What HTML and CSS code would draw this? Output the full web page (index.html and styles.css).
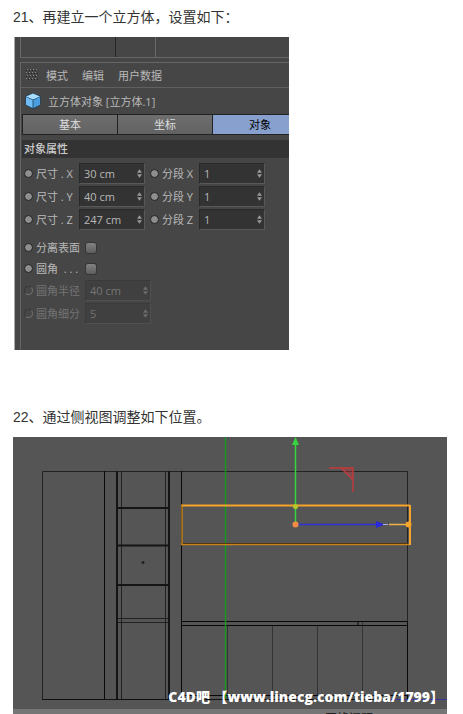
FILE: index.html
```html
<!DOCTYPE html>
<html lang="zh-CN">
<head>
<meta charset="utf-8">
<title>立方体建模步骤</title>
<link rel="stylesheet" href="styles.css">
</head>
<body>
<svg class="defs" width="0" height="0" aria-hidden="true">
  <symbol id="spin" viewBox="0 0 6 10"><path d="M3 0 6 4H0zM3 10 0 6h6z" fill="currentColor"/></symbol>
</svg>
<main class="article">
  <p class="step">21、再建立一个立方体，设置如下：</p>
  <section class="panel" aria-label="立方体对象">
    <div class="strip"><span></span><span></span><span></span></div>
    <div class="inner">
      <nav class="menu">
        <svg class="grip" width="13" height="12" viewBox="0 0 13 12" aria-hidden="true">
          <g stroke="#8a8a8a" stroke-dasharray="1 2"><path d="M1 .5h12M0 3.5h12M1 6.5h12M0 9.5h12"/></g>
          <g stroke="#222" stroke-dasharray="1 2"><path d="M0 1.500h12M2 4.500h11M0 7.500h12M2 10.500h11"/></g>
        </svg>
        <button type="button">模式</button><button type="button">编辑</button><button type="button">用户数据</button>
      </nav>
      <div class="title">
        <svg width="16" height="16" viewBox="0 0 16 16" aria-hidden="true">
          <path d="M8 0 15.500 3v9L8 16 .5 12V3z" fill="#16405f"/>
          <path d="M8 .6 15 3.400 8 6.400 1 3.400z" fill="#a9dcff"/>
          <path d="M1 4l6.600 3v8L1 11.700z" fill="#70bdf5"/>
          <path d="M15 4 8.400 7v8l6.600-3.300z" fill="#4a9ee0"/>
        </svg>
        <span>立方体对象 [立方体.1]</span>
      </div>
      <div class="tabs">
        <button type="button">基本</button><button type="button">坐标</button><button type="button" class="active">对象</button>
      </div>
      <h2 class="group">对象属性</h2>
      <div class="sizes">
        <i class="dot"></i><label for="sx">尺寸 . X</label><span class="field"><input id="sx" value="30 cm"><svg><use href="#spin"/></svg></span>
        <i class="dot"></i><label for="nx">分段 X</label><span class="field"><input id="nx" value="1"><svg><use href="#spin"/></svg></span>
        <i class="dot"></i><label for="sy">尺寸 . Y</label><span class="field"><input id="sy" value="40 cm"><svg><use href="#spin"/></svg></span>
        <i class="dot"></i><label for="ny">分段 Y</label><span class="field"><input id="ny" value="1"><svg><use href="#spin"/></svg></span>
        <i class="dot"></i><label for="sz">尺寸 . Z</label><span class="field"><input id="sz" value="247 cm"><svg><use href="#spin"/></svg></span>
        <i class="dot"></i><label for="nz">分段 Z</label><span class="field"><input id="nz" value="1"><svg><use href="#spin"/></svg></span>
      </div>
      <div class="options">
        <i class="dot"></i><label for="sep">分离表面</label><input type="checkbox" id="sep">
        <i class="dot"></i><label for="fil">圆角 &nbsp;. . .</label><input type="checkbox" id="fil">
        <i class="dot off"></i><label class="dim" for="rad">圆角半径</label><span class="field dim"><input id="rad" value="40 cm" disabled><svg><use href="#spin"/></svg></span>
        <i class="dot off"></i><label class="dim" for="sub">圆角细分</label><span class="field dim"><input id="sub" value="5" disabled><svg><use href="#spin"/></svg></span>
      </div>
    </div>
  </section>
  <p class="step">22、通过侧视图调整如下位置。</p>
  <figure class="view">
    <svg class="wire" viewBox="0 0 434 277" role="img" aria-label="侧视图">
      <rect width="434" height="277" fill="#555"/>
      <rect y="272" width="434" height="5" fill="#757575"/>
      <g fill="none" stroke="#222">
        <path d="M29.500 262V34.500H394.500V262"/>
        <path d="M29 262.500H395" stroke="#111"/>
        <path d="M108.500 35V262M152.500 35V262"/>
        <path d="M104 181.500h52M104 185.500h52"/>
        <path d="M259.500 189v73M304.500 189v73" stroke="#333"/>
        <path d="M214.500 189v73M349.500 185v77" stroke="#333"/>
      </g>
      <g fill="none" stroke="#080808">
        <path d="M91.500 34V262M168.500 34V262"/>
        <path d="M168 184.500H395M168 188.500H395M394.500 184V262M168 258.500H395M345 184v4"/>
      </g>
      <path d="M104 34V262M156 34V262M104 71h52M104 108.500h52M104 148h52" fill="none" stroke="#151515" stroke-width="2"/>
      <circle cx="130" cy="125.500" r="1.500" fill="#222"/>
      <path d="M212.500 0V262" stroke="#149a22" stroke-width="1.400"/>
      <path d="M374 262.500h60" stroke="#34349c"/>
      <path d="M168 106.500H395" stroke="#30200c"/>
      <path d="M168 68.500H397" stroke="#f5a42c" stroke-width="2"/>
      <path d="M169 68V108M168 107.500H396" fill="none" stroke="#c98318" stroke-width="1.400"/>
      <path d="M397 68V108" stroke="#f5a42c" stroke-width="2"/>
      <path d="M282.500 8V87" stroke="#36d43e" stroke-width="1.500"/>
      <path d="M282.500 0 279 8h7z" fill="#36d43e"/>
      <path d="M283 87.500h81" stroke="#3030d8" stroke-width="1.500"/>
      <path d="M363 84v7l9-3.500z" fill="#2929dc"/>
      <path d="M370 87.500h5" stroke="#aaaae4"/>
      <path d="M376 87.500h19" stroke="#efb34a" stroke-width="1.500"/>
      <circle cx="282.500" cy="69.500" r="2.500" fill="#b6c72c"/>
      <circle cx="282.500" cy="87.500" r="3" fill="#f58b43"/>
      <circle cx="395.500" cy="87.500" r="3" fill="#f5a42c"/>
      <path d="M316 31h24v24M328 31l12 12" fill="none" stroke="#c43a3e" stroke-width="1.400"/>
      <path d="M328 31h12v12z" fill="#c43a3e" fill-opacity=".4"/>
      <text x="312" y="286" font-size="12" class="status">网格间距 : 100 cm</text>
    </svg>
    <figcaption class="mark">C4D吧 【www.linecg.com/tieba/1799】</figcaption>
  </figure>
</main>
</body>
</html>
```

FILE: styles.css
```css
* { box-sizing: border-box; }
body {
  margin: 0;
  background: #fff;
  color: #333;
  font-family: "Liberation Sans", "Noto Sans CJK SC", sans-serif;
  font-size: 14px;
}
.defs { position: absolute; }
.article { padding: 7px 16px 0 13px; }
.step { margin: 0; line-height: 20px; padding-bottom: 10px; }
.panel {
  display: flex;
  flex-direction: column;
  max-width: 275px;
  height: 313px;
  margin-bottom: 57px;
  margin-left: 1px;
  padding-left: 5px;
  border-left: 1px solid #aaa;
  background: #464646;
  color: #b8b8b8;
  overflow: hidden;
  font-family: "Open Sans", "Noto Sans CJK SC", sans-serif;
  font-size: 11px;
}
.panel button, .panel input {
  font: inherit;
  color: inherit;
  border: 0;
  padding: 0;
  margin: 0;
  background: none;
}
.strip {
  display: grid;
  grid-template-columns: 95px 40px 1fr;
  height: 21px;
  border-bottom: 1px solid #666;
}
.strip span { border-left: 1px solid #6a6a6a; }
.strip span:nth-child(2) { border-color: #262626; }
.inner {
  flex: 1;
  margin-top: 4px;
  border: solid #666;
  border-width: 1px 0 0 1px;
}
.menu {
  display: flex;
  align-items: center;
  gap: 14px;
  height: 25px;
  padding-left: 5px;
  border-bottom: 1px solid #606060;
}
.grip { margin-right: -7px; }
.title {
  display: flex;
  align-items: center;
  gap: 7px;
  height: 26px;
  padding-left: 4px;
}
.tabs { display: flex; margin-left: 1px; }
.panel .tabs button {
  flex: 0 0 95px;
  height: 21px;
  line-height: 19px;
  border: 1px solid #222;
  border-right-width: 0;
  background: linear-gradient(#6e6e6e, #626262);
  color: #ddd;
}
.panel .tabs .active { background: #87a0cd; color: #000; }
.group {
  margin: 5px 0 4px 1px;
  background: #333;
  font-size: 11px;
  font-weight: 500;
  line-height: 18px;
  padding-left: 2px;
  color: #ccc;
}
.sizes {
  display: grid;
  grid-template-columns: 12px 43px 66px 5px 12px 37px 66px;
  grid-auto-rows: 23px;
  align-items: center;
  padding-left: 3px;
}
.sizes .dot:nth-child(6n + 4) { grid-column: 5; }
.options {
  display: grid;
  grid-template-columns: 12px 49px 66px;
  grid-template-rows: 21px 21px 23px 23px;
  align-items: center;
  padding: 6px 0 0 3px;
}
.panel label { white-space: nowrap; line-height: 18px; }
.dot {
  width: 9px;
  height: 9px;
  border: 1px solid #202020;
  border-radius: 50%;
  background: #8e8e8e;
}
.dot.off { background: #484848; border-color: #383838 #707070 #707070 #383838; }
.field {
  display: flex;
  align-items: center;
  height: 21px;
  padding: 0 2px 0 4px;
  background: #333;
  border: 1px solid #292929;
  border-right-color: #585858;
  border-bottom-color: #585858;
}
.field input { flex: 1; min-width: 0; height: 18px; }
.field svg { width: 5px; height: 9px; color: #999; }
.dim { color: #747474; }
.field.dim { background: #404040; border-color: #3a3a3a #505050 #505050 #3a3a3a; }
.field.dim svg { color: #6c6c6c; }
.panel input[type="checkbox"] {
  appearance: none;
  width: 12px;
  height: 12px;
  border: 1px solid #353535;
  border-radius: 3px;
  background: linear-gradient(#828282, #5e5e5e);
}
.view { position: relative; margin: 0; max-width: 434px; }
.wire { display: block; width: 100%; }
.status { fill: #222; font-family: "Noto Sans CJK SC", sans-serif; }
.mark {
  position: absolute;
  right: 3px;
  bottom: 5px;
  color: #fff;
  font: 800 14px/24px "Open Sans", "Noto Sans CJK SC", sans-serif;
  white-space: nowrap;
}
```
